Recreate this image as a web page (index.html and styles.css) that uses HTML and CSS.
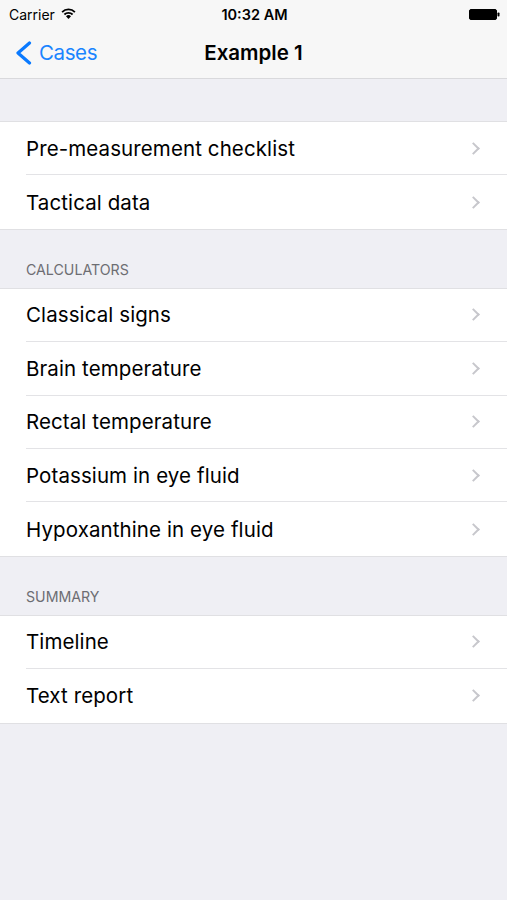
FILE: index.html
```html
<!DOCTYPE html>
<html>
<head>
<meta charset="utf-8">
<link rel="stylesheet" href="styles.css">
</head>
<body>
<div class="screen">
  <header class="bar">
    <div class="status">
      <div class="status-left">
        <span class="carrier">Carrier</span>
        <svg class="wifi" width="15" height="11" viewBox="0 0 15 11">
          <path d="M7.5 11 L5 8.2 A3.6 3.6 0 0 1 10 8.2 Z" fill="#000"/>
          <path d="M3.4 6.5 A5.8 5.8 0 0 1 11.6 6.5" stroke="#000" stroke-width="1.8" fill="none"/>
          <path d="M1.1 4.1 A9 9 0 0 1 13.9 4.1" stroke="#000" stroke-width="1.8" fill="none"/>
        </svg>
      </div>
      <span class="time">10:32 AM</span>
      <div class="status-right">
        <svg width="31" height="11" viewBox="0 0 31 11">
          <rect x="0.5" y="0.5" width="27" height="10" rx="1.5" fill="#000" stroke="#000"/>
          <rect x="28.5" y="3.5" width="2" height="4" rx="0.8" fill="#000"/>
        </svg>
      </div>
    </div>
    <nav class="nav">
      <div class="back">
        <svg width="17" height="24" viewBox="0 0 17 24">
          <path d="M14.5 2 L3 12 L14.5 22" stroke="#0a7aff" stroke-width="3.2" fill="none" stroke-linecap="round" stroke-linejoin="round"/>
        </svg>
        <span>Cases</span>
      </div>
      <div class="title">Example 1</div>
    </nav>
  </header>

  <main class="content">
    <section class="group first">
      <div class="rows">
        <div class="row"><span>Pre-measurement checklist</span><i class="chev"></i></div>
        <div class="row"><span>Tactical data</span><i class="chev"></i></div>
      </div>
    </section>
    <section class="group">
      <h2 class="group-title">CALCULATORS</h2>
      <div class="rows">
        <div class="row"><span>Classical signs</span><i class="chev"></i></div>
        <div class="row"><span>Brain temperature</span><i class="chev"></i></div>
        <div class="row"><span>Rectal temperature</span><i class="chev"></i></div>
        <div class="row"><span>Potassium in eye fluid</span><i class="chev"></i></div>
        <div class="row"><span>Hypoxanthine in eye fluid</span><i class="chev"></i></div>
      </div>
    </section>
    <section class="group">
      <h2 class="group-title">SUMMARY</h2>
      <div class="rows">
        <div class="row"><span>Timeline</span><i class="chev"></i></div>
        <div class="row"><span>Text report</span><i class="chev"></i></div>
      </div>
    </section>
  </main>
</div>
</body>
</html>
```
FILE: styles.css
```css
* { box-sizing: border-box; }
html, body { margin: 0; padding: 0; }
body {
  font-family: Inter, Roboto, "Liberation Sans", sans-serif;
  background: #efeff4;
  color: #000;
}
.screen {
  width: 507px;
  height: 900px;
  background: #efeff4;
  overflow: hidden;
}
.bar {
  background: #f7f7f7;
  border-bottom: 1px solid #d9d9dc;
  height: 79px;
}
.status {
  height: 28px;
  display: grid;
  grid-template-columns: 1fr auto 1fr;
  align-items: center;
  padding: 0 7px 0 9px;
}
.status-left {
  display: flex;
  align-items: center;
  gap: 6px;
}
.carrier {
  font-size: 14px;
}
.wifi { margin-top: -2px; }
.time {
  font-size: 14.5px;
  font-weight: 600;
}
.status-right {
  display: flex;
  justify-content: flex-end;
}
.nav {
  height: 50px;
  display: grid;
  grid-template-columns: 1fr auto 1fr;
  align-items: center;
  padding-bottom: 2px;
}
.back {
  display: flex;
  align-items: center;
  gap: 7px;
  padding-left: 15px;
  color: #1a84ff;
  font-size: 20.5px;
  letter-spacing: -0.4px;
}
.back svg { margin-top: 1px; }
.title {
  font-size: 20.5px;
  font-weight: 600;
}
.content {
  display: flex;
  flex-direction: column;
}
.group.first { padding-top: 42px; }
.group-title {
  margin: 0;
  height: 58px;
  padding: 0 0 10px 26px;
  display: flex;
  align-items: flex-end;
  font-size: 14.2px;
  font-weight: 400;
  color: #6d6d72;
}
.rows {
  background: #fff;
  border-top: 1px solid #e0e0e3;
  border-bottom: 1px solid #e0e0e3;
}
.row {
  height: 53.4px;
  margin-left: 26px;
  padding-right: 27px;
  display: flex;
  align-items: center;
  justify-content: space-between;
  font-size: 20.5px;
  letter-spacing: 0.1px;
  border-bottom: 1px solid #e3e3e6;
}
.row:last-child { border-bottom: none; }
.chev {
  width: 9px;
  height: 9px;
  border-right: 2px solid #c7c7cc;
  border-top: 2px solid #c7c7cc;
  transform: rotate(45deg);
  margin-right: 2px;
}
```
